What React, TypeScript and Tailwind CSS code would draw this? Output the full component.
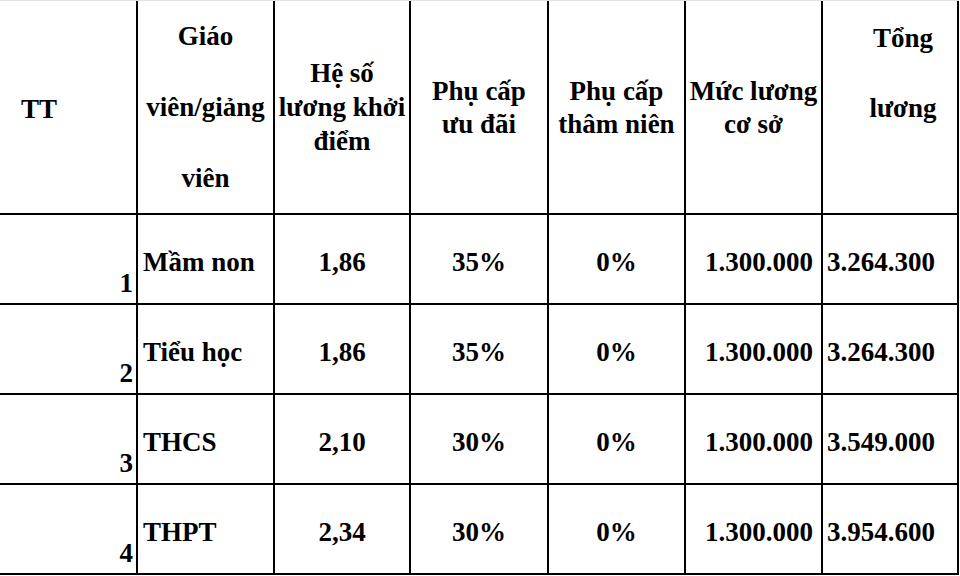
const rows = [
  { tt: "1", name: "Mầm non", heSo: "1,86", uuDai: "35%", thamNien: "0%", muc: "1.300.000", tong: "3.264.300" },
  { tt: "2", name: "Tiểu học", heSo: "1,86", uuDai: "35%", thamNien: "0%", muc: "1.300.000", tong: "3.264.300" },
  { tt: "3", name: "THCS", heSo: "2,10", uuDai: "30%", thamNien: "0%", muc: "1.300.000", tong: "3.549.000" },
  { tt: "4", name: "THPT", heSo: "2,34", uuDai: "30%", thamNien: "0%", muc: "1.300.000", tong: "3.954.600" },
]

const cell = "border-r-2 border-b-2 border-black flex whitespace-nowrap"

export default function App() {
  return (
    <div
      className="w-[960px] h-[576px] bg-white text-black font-bold text-[27px]"
      style={{ fontFamily: '"Liberation Serif", "Times New Roman", serif' }}
    >
      <div className="w-[959px] border-t border-[#e2e2e2] grid grid-cols-[138px_137px_136px_138px_137px_137px_136px] grid-rows-[214px_90px_90px_90px_90px]">
        {/* header */}
        <div className={`${cell} items-center pl-[21px] pt-[4px]`}>TT</div>
        <div className={`${cell} flex-col items-center leading-[71px]`}>
          <span>Giáo</span>
          <span>viên/giảng</span>
          <span>viên</span>
        </div>
        <div className={`${cell} items-center justify-center text-center leading-[34px]`}>
          <span>
            Hệ số
            <br />
            lương khởi
            <br />
            điểm
          </span>
        </div>
        <div className={`${cell} items-center justify-center text-center leading-[33px] pt-[2px]`}>
          <span>
            Phụ cấp
            <br />
            ưu đãi
          </span>
        </div>
        <div className={`${cell} items-center justify-center text-center leading-[33px] pt-[2px]`}>
          <span>
            Phụ cấp
            <br />
            thâm niên
          </span>
        </div>
        <div className={`${cell} items-center justify-center text-center leading-[33px] pt-[2px]`}>
          <span>
            Mức lương
            <br />
            cơ sở
          </span>
        </div>
        <div className={`${cell} flex-col items-center leading-[70px] pt-[2px] pl-[26px]`}>
          <span>Tổng</span>
          <span>lương</span>
        </div>

        {/* body */}
        {rows.map((r) => (
          <div key={r.tt} className="contents">
            <div className={`${cell} items-end justify-end pr-[3px]`}>{r.tt}</div>
            <div className={`${cell} items-center pl-[5px] pt-[6px]`}>{r.name}</div>
            <div className={`${cell} items-center justify-center pt-[6px]`}>{r.heSo}</div>
            <div className={`${cell} items-center justify-center pt-[6px]`}>{r.uuDai}</div>
            <div className={`${cell} items-center justify-center pt-[6px]`}>{r.thamNien}</div>
            <div className={`${cell} items-center justify-end pr-[8px] pt-[6px]`}>{r.muc}</div>
            <div className={`${cell} items-center pl-[4px] pt-[6px]`}>{r.tong}</div>
          </div>
        ))}
      </div>
    </div>
  )
}
